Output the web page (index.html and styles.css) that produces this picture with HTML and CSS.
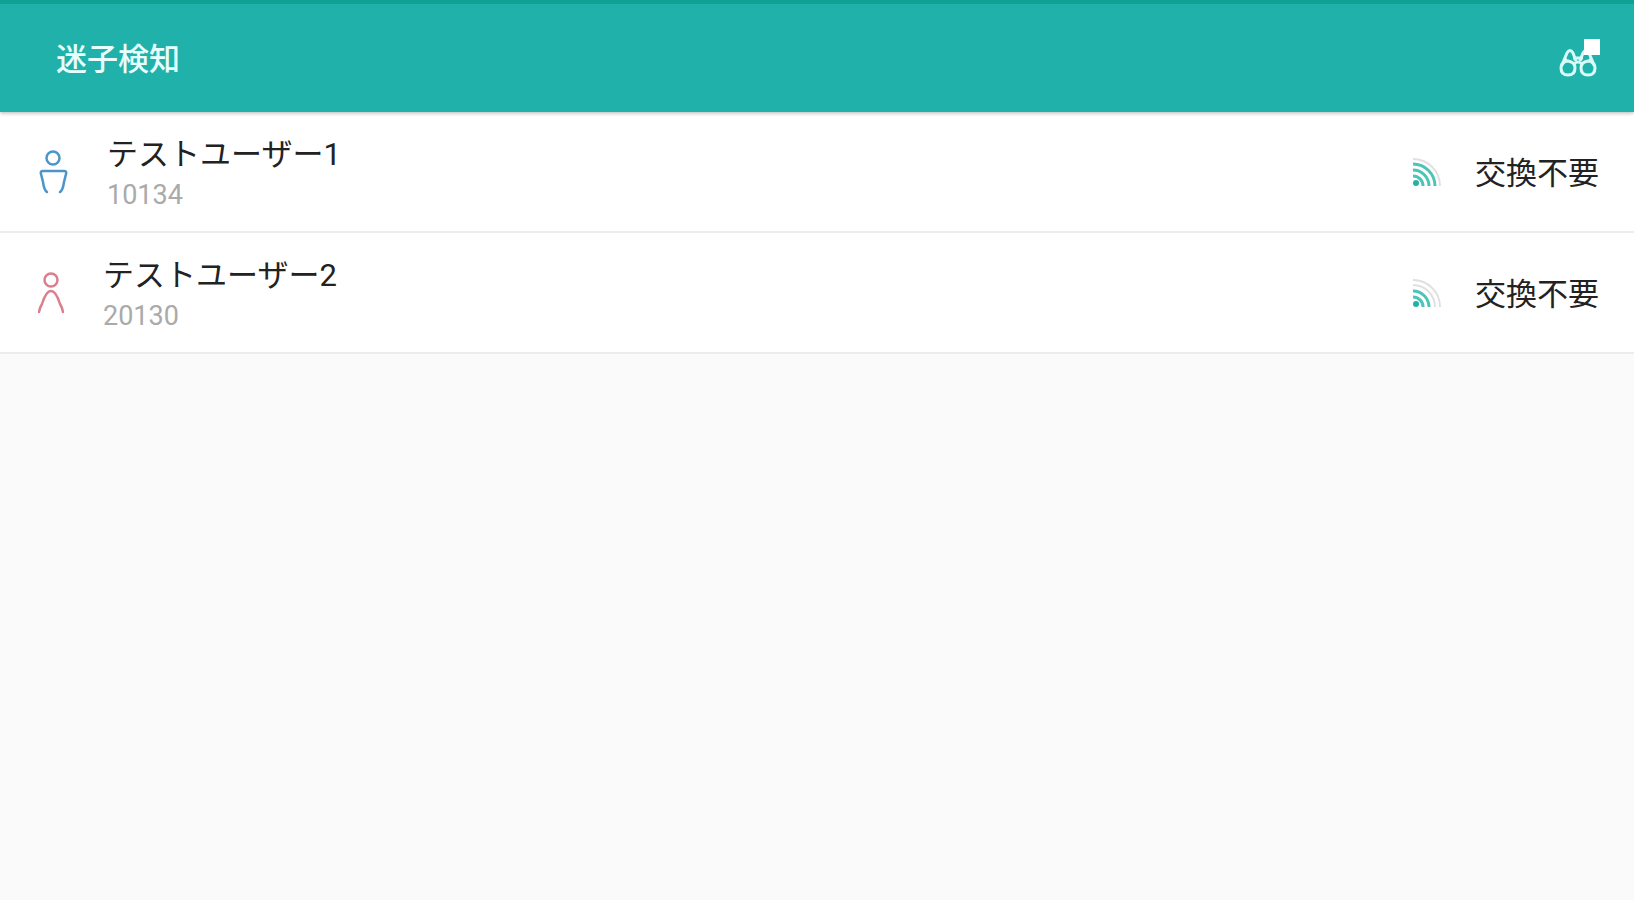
FILE: index.html
```html
<!DOCTYPE html>
<html lang="ja">
<head>
    <meta charset="UTF-8">
    <meta name="viewport" content="width=device-width, initial-scale=1.0">
    <title>迷子検知</title>
    <link rel="stylesheet" href="styles.css">
</head>
<body>

    <header class="app-bar">
        <h1 class="title">迷子検知</h1>
        <button class="search-btn" type="button" aria-label="検知">
            <svg width="42" height="42" viewBox="0 0 42 42" fill="none" stroke="#d8faf8" stroke-width="3" stroke-linejoin="round">
                <path d="M8 22Q2 26 2 31Q2 38 9 38Q16 38 16 31Q16 25 9 24Q5 24 3 28L8 16Q11 11 14 16L17 24"/>
                <path d="M30 22Q36 26 36 31Q36 38 29 38Q22 38 22 31Q22 25 29 24Q33 24 35 28L30 16Q27 11 24 16L21 24"/>
                <path d="M14 21H24M15 27Q19 23 23 27"/>
                <rect x="25" y="2" width="16" height="16" fill="#fff" stroke="none"/>
            </svg>
        </button>
    </header>

    <!-- User List -->
    <ul class="user-list">
        <li class="user">
            <svg class="person male" width="30" height="48" viewBox="0 0 30 48">
                <circle cx="15" cy="10" r="6.5"/>
                <path d="M9 44Q6 42 5 34L3 26Q2 23 5 23H26Q29 23 28 26L26 34Q25 42 22 44"/>
            </svg>
            <div class="info">
                <div class="name">テストユーザー1</div>
                <div class="number">10134</div>
            </div>
            <svg class="signal" width="28" height="28" viewBox="0 0 28 28">
                <circle class="dot" cx="3" cy="25" r="3"/>
                <path class="on" d="M0 18A10 10 0 0 1 10 28M0 12A16 16 0 0 1 16 28M0 6A22 22 0 0 1 22 28"/>
                <path class="off" d="M0 1A27 27 0 0 1 27 28"/>
            </svg>
            <div class="battery">交換不要</div>
        </li>
        <li class="user">
            <svg class="person female" width="26" height="48" viewBox="0 0 26 48">
                <circle cx="13" cy="11" r="6.5"/>
                <path d="M1 43Q2 38 4 35Q8 22 13 22Q18 22 22 35Q24 38 25 43"/>
            </svg>
            <div class="info">
                <div class="name">テストユーザー2</div>
                <div class="number">20130</div>
            </div>
            <svg class="signal" width="28" height="28" viewBox="0 0 28 28">
                <circle class="dot" cx="3" cy="25" r="3"/>
                <path class="on" d="M0 18A10 10 0 0 1 10 28M0 12A16 16 0 0 1 16 28"/>
                <path class="off" d="M0 6A22 22 0 0 1 22 28M0 1A27 27 0 0 1 27 28"/>
            </svg>
            <div class="battery">交換不要</div>
        </li>
    </ul>

</body>
</html>
```

FILE: styles.css
```css
body {
    font-family: Roboto, "Noto Sans CJK JP", sans-serif;
    margin: 0;
    background: #fafafa;
    color: #222;
}

/* Header */
.app-bar {
    display: flex;
    align-items: center;
    justify-content: space-between;
    box-sizing: border-box;
    height: 112px;
    padding: 0 33px 0 56px;
    background: #20b2aa;
    border-top: 4px solid #0fa194;
    box-shadow: 0 1px 4px rgba(0, 0, 0, 0.3);
    position: relative;
}

.title {
    margin: 0;
    padding-top: 3px;
    color: #e8ffff;
    font-size: 31px;
    font-weight: 500;
    line-height: 40px;
}

.search-btn {
    padding: 0;
    border: none;
    background: none;
    cursor: pointer;
}

.search-btn svg {
    display: block;
}

/* User List */
.user-list {
    margin: 0;
    padding: 0;
    list-style: none;
}

.user {
    display: flex;
    align-items: center;
    padding: 17px 35px 16px 38px;
    background: #fff;
    border-bottom: 2px solid #ececec;
}

.person {
    fill: none;
    stroke-width: 2.5;
    stroke-linecap: round;
}

.male {
    stroke: #4a96cc;
}

.female {
    stroke: #d9808c;
}

.info {
    flex: 1;
    margin-left: 39px;
    padding-top: 6px;
}

.name,
.battery {
    font-size: 31px;
    line-height: 40px;
}

.battery {
    padding-top: 3px;
}

.number {
    color: #aaa;
    font-size: 27px;
    line-height: 40px;
}

/* Signal strength */
.signal {
    margin-right: 34px;
    fill: none;
    stroke-width: 3;
}

.dot {
    fill: #20b2aa;
}

.on {
    stroke: #4cc4b8;
}

.off {
    stroke: #e0e0e0;
    stroke-width: 2;
}
```
